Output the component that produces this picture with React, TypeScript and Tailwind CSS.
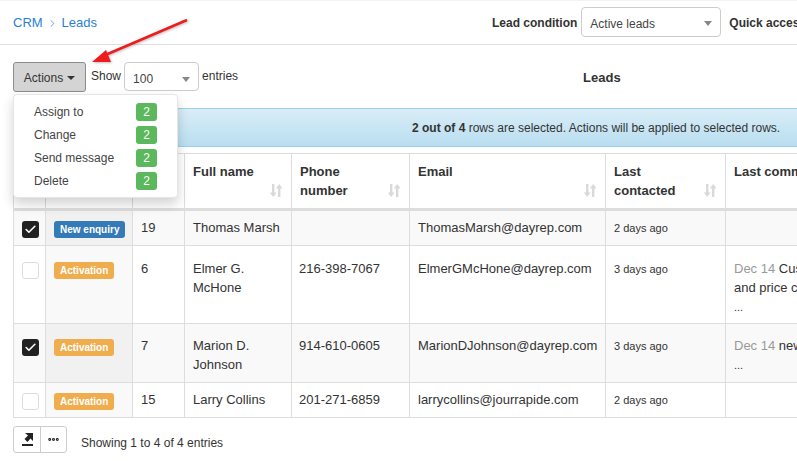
import { ReactNode } from "react";
import { Check, ChevronRight, MoreHorizontal } from "lucide-react";

const menuItems = ["Assign to", "Change", "Send message", "Delete"];

type Lead = {
  checked: boolean;
  label: string;
  labelClass: string;
  id: string;
  name: ReactNode;
  phone: string;
  email: string;
  contacted: string;
  comment?: ReactNode;
  rowClass: string;
  textPad: string;
  smallPad: string;
  markPad: string;
};

const leads: Lead[] = [
  {
    checked: true,
    label: "New enquiry",
    labelClass: "bg-[#337ab7]",
    id: "19",
    name: "Thomas Marsh",
    phone: "",
    email: "ThomasMarsh@dayrep.com",
    contacted: "2 days ago",
    rowClass: "h-[36px] bg-[#f9f9f9]",
    textPad: "pt-[7px]",
    smallPad: "pt-[8px]",
    markPad: "pt-[10px]",
  },
  {
    checked: false,
    label: "Activation",
    labelClass: "bg-[#f0ad4e]",
    id: "6",
    name: "Elmer G. McHone",
    phone: "216-398-7067",
    email: "ElmerGMcHone@dayrep.com",
    contacted: "3 days ago",
    comment: (
      <>
        <span className="text-[#999]">Dec 14</span> Customer
        <br />
        and price check
        <br />
        <span className="text-[11px]">...</span>
      </>
    ),
    rowClass: "h-[78px] bg-white",
    textPad: "pt-[13px]",
    smallPad: "pt-[14px]",
    markPad: "pt-[16px]",
  },
  {
    checked: true,
    label: "Activation",
    labelClass: "bg-[#f0ad4e]",
    id: "7",
    name: "Marion D. Johnson",
    phone: "914-610-0605",
    email: "MarionDJohnson@dayrep.com",
    contacted: "3 days ago",
    comment: (
      <>
        <span className="text-[#999]">Dec 14</span> new
        <br />
        <span className="text-[11px]">...</span>
      </>
    ),
    rowClass: "h-[59px] bg-[#f9f9f9]",
    textPad: "pt-[12px]",
    smallPad: "pt-[13px]",
    markPad: "pt-[15px]",
  },
  {
    checked: false,
    label: "Activation",
    labelClass: "bg-[#f0ad4e]",
    id: "15",
    name: "Larry Collins",
    phone: "201-271-6859",
    email: "larrycollins@jourrapide.com",
    contacted: "2 days ago",
    rowClass: "h-[35px] bg-white",
    textPad: "pt-[7px]",
    smallPad: "pt-[8px]",
    markPad: "pt-[10px]",
  },
];

function SortIcon() {
  return (
    <svg width="14" height="13" viewBox="0 0 14 13" className="absolute right-[8px] bottom-[11px] text-[#d9d9d9]" aria-hidden="true">
      <path d="M3 0h2.4v8.5H7.6L4.2 13 .8 8.5H3z M9 13V4.5H6.8L10.2 0l3.4 4.5H11.4V13z" fill="currentColor" />
    </svg>
  );
}

function SelectBox({ value, className }: { value: string; className: string }) {
  return (
    <div className={`flex items-center justify-between rounded-[4px] border border-[#ccc] bg-white pl-[8px] pr-[7px] text-[12px] text-[#444] ${className}`}>
      <span>{value}</span>
      <span className="mr-[1px] h-0 w-0 border-x-[4px] border-t-[5px] border-x-transparent border-t-[#888]" />
    </div>
  );
}

function HeaderCell({ children, sort = true }: { children?: ReactNode; sort?: boolean }) {
  return (
    <th className="relative border border-[#ddd] border-b-[3px] px-[8px] pt-[8px] pb-[8px] text-left align-top text-[13px] font-bold leading-[19px] text-[#333]">
      {children}
      {sort && <SortIcon />}
    </th>
  );
}

export default function App() {
  return (
    <div className="relative h-[461px] w-[797px] overflow-hidden bg-white font-['Liberation_Sans',Arial,sans-serif] text-[13px] text-[#333]">
      <header className="flex h-[45px] items-center border-t border-b border-t-[#f3f3f3] border-b-[#e0e0e0] pl-[13px]">
        <nav className="mt-[1px] flex items-center text-[13px] text-[#2a7fd5]">
          <span>CRM</span>
          <ChevronRight size={11} className="mx-[4px] text-[#5f97cf]" />
          <span>Leads</span>
        </nav>
        <div className="ml-auto flex w-[305px] shrink-0 items-center whitespace-nowrap">
          <span className="mr-[4px] text-[12px] font-bold">Lead condition</span>
          <SelectBox value="Active leads" className="mb-[2px] h-[30px] w-[140px] shrink-0 pt-[4px]" />
          <span className="ml-[8px] text-[12px] font-bold">Quick access</span>
        </div>
      </header>

      <div className="flex h-[63px] items-start pl-[13px] pt-[17px] text-[12px]">
        <button className="flex h-[30px] w-[73px] items-center justify-center gap-[4px] rounded-[3px] border border-[#8c8c8c] bg-[#d4d4d4] pt-[1px] text-[#333]">
          Actions
          <span className="h-0 w-0 border-x-[4px] border-t-[4px] border-x-transparent border-t-[#333]" />
        </button>
        <span className="ml-[5px] mt-[5px]">Show</span>
        <SelectBox value="100" className="ml-[3px] h-[29px] w-[75px] pt-[5px]" />
        <span className="ml-[3px] mt-[5px]">entries</span>
        <span className="ml-[345px] mt-[6px] text-[13px] font-bold">Leads</span>
      </div>

      <div className="ml-[13px] flex h-[39px] w-[800px] items-center whitespace-nowrap border-y border-[#9acfea] bg-gradient-to-b from-[#d9edf7] to-[#b9def0] pl-[399px] pt-[1px] text-[12px]">
        <span>
          <b>2 out of 4</b> rows are selected. Actions will be applied to selected rows.
        </span>
      </div>

      <table className="ml-[13px] mt-[6px] w-[900px] table-fixed border-collapse">
        <colgroup>
          <col className="w-[32px]" />
          <col className="w-[87px]" />
          <col className="w-[52px]" />
          <col className="w-[107px]" />
          <col className="w-[118px]" />
          <col className="w-[196px]" />
          <col className="w-[120px]" />
          <col className="w-[188px]" />
        </colgroup>
        <thead>
          <tr className="h-[55px]">
            <HeaderCell sort={false} />
            <HeaderCell sort={false} />
            <HeaderCell sort={false} />
            <HeaderCell>Full name</HeaderCell>
            <HeaderCell>
              Phone
              <br />
              number
            </HeaderCell>
            <HeaderCell>Email</HeaderCell>
            <HeaderCell>
              Last
              <br />
              contacted
            </HeaderCell>
            <HeaderCell sort={false}>
              <span className="whitespace-nowrap">Last comment</span>
            </HeaderCell>
          </tr>
        </thead>
        <tbody>
          {leads.map((lead) => (
            <tr key={lead.email} className={lead.rowClass}>
              <td className={`border border-[#ddd] pl-[8px] align-top ${lead.markPad}`}>
                <span
                  className={`flex h-[17px] w-[17px] items-center justify-center rounded-[3px] ${
                    lead.checked ? "bg-[#222]" : "border border-[#ddd] bg-white"
                  }`}
                >
                  {lead.checked && <Check size={13} strokeWidth={3} className="text-white" />}
                </span>
              </td>
              <td className={`border border-[#ddd] pl-[8px] align-top ${lead.markPad} ${lead.checked ? "bg-[#f1f1f1]" : "bg-[#f9f9f9]"}`}>
                <span className={`flex h-[17px] w-fit items-center rounded-[3px] px-[6px] text-[10px] font-bold text-white ${lead.labelClass}`}>
                  {lead.label}
                </span>
              </td>
              <td className={`border border-[#ddd] px-[8px] align-top leading-[19px] ${lead.textPad}`}>{lead.id}</td>
              <td className={`border border-[#ddd] px-[8px] align-top leading-[19px] ${lead.textPad}`}>{lead.name}</td>
              <td className={`border border-[#ddd] pl-[7px] pr-[8px] align-top leading-[19px] ${lead.textPad}`}>{lead.phone}</td>
              <td className={`border border-[#ddd] px-[8px] align-top leading-[19px] ${lead.textPad}`}>{lead.email}</td>
              <td className={`border border-[#ddd] px-[8px] align-top text-[11px] leading-[19px] ${lead.smallPad}`}>{lead.contacted}</td>
              <td className={`whitespace-nowrap border border-[#ddd] px-[8px] align-top leading-[19px] ${lead.textPad}`}>{lead.comment}</td>
            </tr>
          ))}
        </tbody>
      </table>

      <div className="ml-[13px] mt-[8px] flex items-center">
        <div className="flex h-[27px] w-[54px] rounded-[3px] border border-[#ccc]">
          <span className="flex w-[27px] items-center justify-center border-r border-[#ccc]">
            <svg width="13" height="13" viewBox="0 0 13 13" aria-hidden="true">
              <path d="M1 11h11v2H1z" fill="#222" />
              <path d="M4 0h8v8l-2.5-2.5L6.5 9 3.5 6 7 2.5z" fill="#222" />
            </svg>
          </span>
          <span className="flex flex-1 items-center justify-center text-[#222]">
            <MoreHorizontal size={13} strokeWidth={3.5} />
          </span>
        </div>
        <span className="ml-[14px] mt-[6px] text-[12px]">Showing 1 to 4 of 4 entries</span>
      </div>

      <div className="absolute left-[13px] top-[94px] w-[165px] rounded-[4px] border border-[#e5e5e5] bg-white pl-[20px] pr-[20px] pt-[8px] pb-[2px] shadow-[0_6px_12px_rgba(0,0,0,0.175)]">
        {menuItems.map((item) => (
          <div key={item} className="mb-[5px] flex h-[18px] items-center justify-between text-[12px] text-[#444]">
            <span>{item}</span>
            <span className="flex h-[18px] w-[21px] items-center justify-center rounded-[3px] bg-[#5cb85c] text-[12px] text-white">2</span>
          </div>
        ))}
      </div>

      <svg className="absolute left-[88px] top-[15px] drop-shadow-[1px_1px_1px_rgba(0,0,0,0.25)]" width="104" height="52" viewBox="0 0 104 52" aria-hidden="true">
        <path d="M99 5 15 41" stroke="#ee1c1c" strokeWidth="2.5" fill="none" />
        <path d="M4 47 18 35l5 12z" fill="#ee1c1c" />
      </svg>
    </div>
  );
}
